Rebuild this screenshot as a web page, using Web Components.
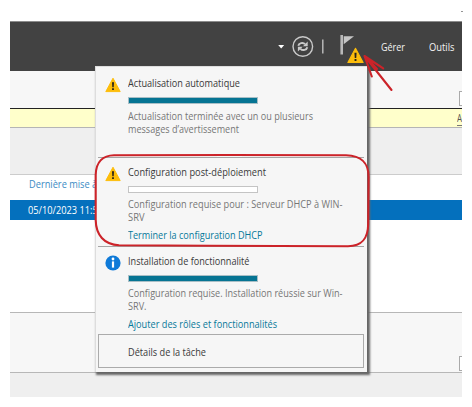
<!DOCTYPE html>
<html lang="fr"><head><meta charset="utf-8"><title>Gestionnaire de serveur</title>
<style>
html,body{margin:0;width:472px;height:407px;overflow:hidden;background:#fff}
body{font:10.3px/13px "Open Sans","Noto Sans",sans-serif;color:#3a3a3a}
</style></head><body>
<server-manager></server-manager>
<script>
const root = (el, html) => { el.attachShadow({mode:'open'}).innerHTML = html; return el.shadowRoot; };

// One line of text, condensed horizontally to the given width.
customElements.define('fit-text', class extends HTMLElement {
  connectedCallback() {
    if (this.shadowRoot) return;
    const w = +this.getAttribute('w');
    const s = root(this, `<style>:host{display:block;white-space:nowrap;height:13px;width:${w}px}
      span{display:inline-block;transform-origin:0 50%}</style><span><slot></slot></span>`).querySelector('span');
    s.style.transform = `scaleX(${w / s.getBoundingClientRect().width})`;
  }
});

customElements.define('status-icon', class extends HTMLElement {
  connectedCallback() {
    const info = this.getAttribute('kind') === 'info';
    root(this, `<style>:host{display:block;width:16px;height:16px}svg{display:block;width:100%;height:100%}</style>` + (info
      ? `<svg viewBox="0 0 16 16"><circle cx="8" cy="8" r="7.6" fill="#0f7ad8"/><circle cx="8" cy="4" r="1.4" fill="#fff"/><path d="M6.9 6.4h2.2v6.2H6.9z" fill="#fff"/></svg>`
      : `<svg viewBox="0 0 16 16"><path d="M8 1.2 15.2 14.6H.8z" fill="#fdbd0b" stroke="#fdbd0b" stroke-width="1" stroke-linejoin="round"/><path d="M7 5.3h2l-.3 5H7.3zM7.1 11.3h1.8v1.8H7.1z" fill="#28231a"/></svg>`));
  }
});

customElements.define('progress-bar', class extends HTMLElement {
  connectedCallback() {
    const full = this.hasAttribute('full');
    root(this, `<style>:host{display:block;box-sizing:border-box;width:130px;height:7px;border:1px solid ${full ? '#a9bfc6' : '#c4c4c4'};background:${full ? '#067493' : '#fff'}}</style>`);
  }
});

customElements.define('task-item', class extends HTMLElement {
  connectedCallback() {
    root(this, `<style>
      :host{display:grid;grid-template-columns:16px 1fr;column-gap:6.5px;box-sizing:border-box;margin:0 3px 0 2px;padding:8px 0 0 7px;border-top:1px solid #a5a5a5}
      :host([first]){border-color:transparent;padding-top:9px}
      .body{display:flex;flex-direction:column;align-items:flex-start}
      .bar{margin:7px 0 5px}:host([first]) .bar{margin-bottom:6px}.desc{color:#777}
      .link{color:#08799a;margin-top:5px}
      </style><slot name="icon"></slot><div class="body"><slot name="title"></slot><div class="bar"><slot name="bar"></slot></div>
      <div class="desc"><slot></slot></div><div class="link"><slot name="link"></slot></div></div>`);
  }
});

customElements.define('notification-panel', class extends HTMLElement {
  connectedCallback() {
    root(this, `<style>
      :host{display:flex;flex-direction:column;box-sizing:border-box;width:272px;height:306px;background:#f6f6f6;border:1px solid #ddd;border-width:1px 0 0 1px;box-shadow:2px 2px 2px 1px #666}
      .a{height:90px}.b{height:89px}.c{height:88px}
      .details{box-sizing:border-box;height:34px;margin:0 3px 0 2px;border:1px solid #ababab;padding:11px 0 0 28.5px}
      </style>
      <task-item first class="a"><status-icon slot="icon"></status-icon><fit-text slot="title" w="112">Actualisation automatique</fit-text><progress-bar slot="bar" full></progress-bar>
        <fit-text w="185">Actualisation terminée avec un ou plusieurs</fit-text><fit-text w="111">messages d’avertissement</fit-text></task-item>
      <task-item class="b"><status-icon slot="icon"></status-icon><fit-text slot="title" w="138">Configuration post-déploiement</fit-text><progress-bar slot="bar"></progress-bar>
        <fit-text w="214.5">Configuration requise pour : Serveur DHCP à WIN-</fit-text><fit-text w="16.5">SRV</fit-text><fit-text slot="link" w="134.5">Terminer la configuration DHCP</fit-text></task-item>
      <task-item class="c"><status-icon slot="icon" kind="info"></status-icon><fit-text slot="title" w="121.5">Installation de fonctionnalité</fit-text><progress-bar slot="bar" full></progress-bar>
        <fit-text w="214.5">Configuration requise. Installation réussie sur Win-</fit-text><fit-text w="18.5">SRV.</fit-text><fit-text slot="link" w="149">Ajouter des rôles et fonctionnalités</fit-text></task-item>
      <div class="details"><fit-text w="78">Détails de la tâche</fit-text></div>`);
  }
});

customElements.define('top-bar', class extends HTMLElement {
  connectedCallback() {
    root(this, `<style>:host{display:flex;align-items:center;height:50px;box-sizing:border-box;background:#424242;border-top:1px solid #8c8c8c;color:#f2f2f2;padding:1px 0 0 267px}
      svg{display:block;flex:none}fit-text{flex:none;margin-left:1px}.tools{margin-left:24px}</style>
      <svg width="103" height="48" viewBox="277 23 103 48" fill="none">
        <path d="M278.2 45h6L281.2 48.4z" fill="#fff"/>
        <circle cx="302.8" cy="46.5" r="9.8" stroke="#c9c9c9" stroke-width="1.4"/>
        <path d="M298.3 45.8c.5-2.6 4.6-4 6.8-1.6M307.3 47.2c-.5 2.6-4.6 4-6.8 1.6" stroke="#c9c9c9" stroke-width="1.9"/>
        <path d="M307.7 41.6v4.7h-4.8zM297.9 51.4v-4.7h4.8z" fill="#c9c9c9"/>
        <path d="M322.8 39.5V53.6" stroke="#bfbfbf" stroke-width="1.4"/>
        <path d="M340.4 35h2.6v19.5h-2.6z" fill="#b9b9b9"/><path d="M343.7 36.2H354L343.7 44.3z" fill="#c6c6c6"/>
      </svg>
      <fit-text w="24">Gérer</fit-text><fit-text class="tools" w="25.5">Outils</fit-text>`);
  }
});

customElements.define('server-manager', class extends HTMLElement {
  connectedCallback() {
    root(this, `<style>
      :host{display:block;position:relative;width:472px;height:407px;overflow:hidden}
      .win{margin:21px 0 0 10px;width:452px;height:376px;display:flex;flex-direction:column;overflow:hidden}
      .win>*{box-sizing:border-box;flex:none}
      .light{background:#f7f7f7;display:flex;justify-content:flex-end}
      .field{box-sizing:border-box;width:3px;height:15px;border:1px solid #aaa;border-right:0;background:#fff}
      .l1{height:37px;padding-top:20px}
      .notice{height:20px;background:#ffffcb;border-top:1px solid #222;border-bottom:1px solid #b5b5b5;display:flex;justify-content:flex-end;padding-top:3px;color:#555}
      .more{border-bottom:1px solid #777}
      .gap{height:47px;background:#efefef;border-bottom:1px solid #ccc}
      .head{height:25px;padding:3px 0 0 19px;color:#3b8bc4;display:flex}
      .row{height:20px;background:#0470bd;color:#fff;padding:4px 0 0 18px}
      .blank{height:92px}
      .l2{height:61px;border:1px solid #b7b7b7;border-width:1px 0;padding-top:43px}
      .foot{height:24px;background:#efefef}
      notification-panel{position:absolute;left:95px;top:66px}
      .badge{position:absolute;left:347px;top:47px;width:17px;height:17px}
      .ink{position:absolute;left:0;top:0}
      </style>
      <div class="win"><top-bar></top-bar>
        <div class="light l1"><div class="field"></div></div>
        <div class="notice"><fit-text w="5" class="more">A</fit-text></div>
        <div class="gap"></div>
        <div class="head"><fit-text w="88">Dernière mise à jour</fit-text></div>
        <div class="row"><fit-text w="88">05/10/2023 11:53:24</fit-text></div>
        <div class="blank"></div>
        <div class="light l2"><div class="field"></div></div>
        <div class="foot"></div>
      </div>
      <notification-panel></notification-panel>
      <status-icon class="badge"></status-icon>
      <svg class="ink" width="472" height="407" fill="none" stroke="#cc2329" stroke-width="2.1" stroke-linecap="round">
        <path d="M114 155.3Q230 154.6 346 155.3C362 155.8 368.6 163 368.6 177L368.2 224C368 239 362 246 348 246.2L210 245.8 119 245.2C104 244.5 96 235 95.7 220V175C96 162 103 155.5 114 155.3Z"/>
        <path d="M364.5 56 391.5 90M364.5 56 383.2 68.3M364.5 56 371.8 76.5M366 57 377 69"/>
        <path d="M461.5 11.5h1" stroke="#888" stroke-width="1"/>
      </svg>`);
  }
});
</script></body></html>
